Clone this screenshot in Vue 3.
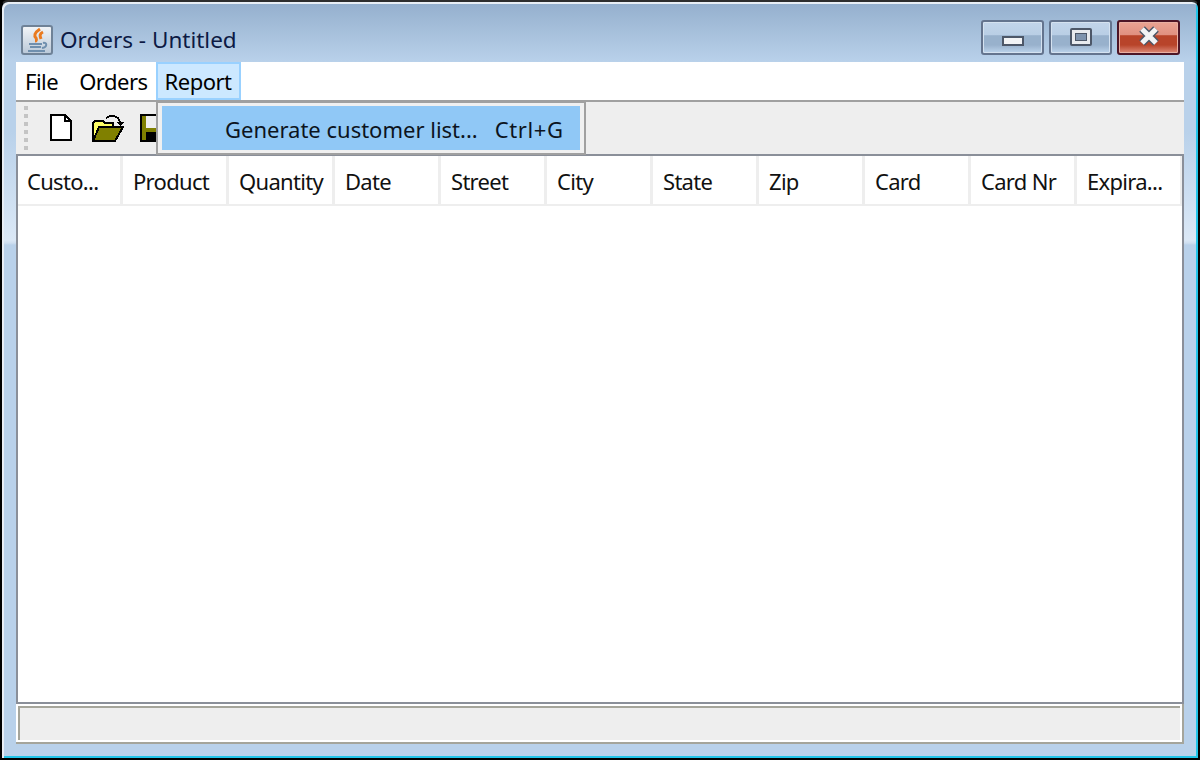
<template>
  <div class="window">
    <div class="titlebar">
      <svg class="app-icon" width="32" height="30" viewBox="0 0 32 30">
        <defs>
          <linearGradient id="tile" x1="0" y1="0" x2="0" y2="1">
            <stop offset="0" stop-color="#f4f6f8" />
            <stop offset="1" stop-color="#b9c8d8" />
          </linearGradient>
        </defs>
        <rect x="1" y="1" width="30" height="28" rx="2" fill="url(#tile)" stroke="#6f8297" stroke-width="2" />
        <path d="M19 4c-6 4-6 7-4 9 1 2 0 3-1 3M22 7c-4 2-3 4-2 7" fill="none" stroke="#ea7a1e" stroke-width="3" />
        <path d="M8 19h13M9 22h11M7 26h17M22 18c4-1 5 4-1 5" fill="none" stroke="#6f8fae" stroke-width="2" />
      </svg>
      <span class="title">Orders - Untitled</span>
      <div class="caption-buttons">
        <div class="cap-btn"><span class="min-glyph"></span></div>
        <div class="cap-btn"><span class="max-glyph"></span></div>
        <div class="cap-btn close">
          <svg class="close-glyph" width="24" height="20" viewBox="0 0 24 20">
            <path d="M5 3l14 14M19 3L5 17" fill="none" stroke="#4d5768" stroke-width="8" />
            <path d="M5 3l14 14M19 3L5 17" fill="none" stroke="#f2f3f5" stroke-width="5" />
          </svg>
        </div>
      </div>
    </div>

    <div class="content">
      <div class="menubar">
        <div v-for="m in menus" :key="m" class="menu" :class="{ open: m === 'Report' }">{{ m }}</div>
      </div>

      <div class="toolbar">
        <div class="grip"><i v-for="n in 6" :key="n"></i></div>
        <svg class="tool tool-new" width="24" height="28" viewBox="0 0 12 14" shape-rendering="crispEdges">
          <path d="M.5.5h7l3 3v9.500h-10z" fill="#fff" stroke="#000" />
          <path d="M7.500.5v3h3" fill="none" stroke="#000" />
        </svg>
        <svg class="tool tool-open" width="32" height="28" viewBox="0 0 16 14" shape-rendering="crispEdges">
          <path d="M.5 13.500v-9l1-1h4l1 1h4v2h-6l-3 7z" fill="#ffff66" stroke="#000" />
          <path d="M.5 13.500l3-7h12l-4 7z" fill="#808000" stroke="#000" />
          <path d="M7 2l2-1h2l2 1 1 2" fill="none" stroke="#000" />
          <path d="M12 4h4l-2 2z" fill="#000" />
        </svg>
        <svg class="tool tool-save" width="28" height="28" viewBox="0 0 14 14" shape-rendering="crispEdges">
          <rect x=".5" y=".5" width="13" height="13" fill="#808000" stroke="#000" />
          <rect x="3" y="1" width="8" height="6" fill="#eee" />
          <rect x="3" y="9" width="8" height="4" fill="#000" />
        </svg>
      </div>

      <div class="table">
        <div class="thead">
          <div v-for="c in columns" :key="c" class="th">{{ c }}</div>
        </div>
      </div>

      <div class="statusbar"><div class="status-inner"></div></div>

      <div class="popup">
        <div class="popup-item">
          <span>Generate customer list...</span>
          <span class="shortcut">Ctrl+G</span>
        </div>
      </div>
    </div>
  </div>
</template>

<script setup>
const menus = ['File', 'Orders', 'Report']
const columns = ['Custo...', 'Product', 'Quantity', 'Date', 'Street', 'City', 'State', 'Zip', 'Card', 'Card Nr', 'Expira...']
</script>

<style>
html, body { margin: 0; background: #000; }
</style>

<style scoped>
.window {
  box-sizing: border-box;
  width: 1200px;
  height: 760px;
  display: flex;
  flex-direction: column;
  padding: 0 14px 14px;
  border: 2px solid #000;
  border-top-color: #2e2e2e;
  box-shadow: inset 2px 2px 0 #e8eef5, inset -2px -2px 0 #22c4e8;
  background: linear-gradient(#94afcd 0, #b9d1ea 60px, #b9d1ea 130px, #dbe8f6 238px, #cfdff0 241px, #b9d1ea 243px);
  font-family: "Noto Sans", "DejaVu Sans", sans-serif;
  color: #000;
  border-radius: 8px 8px 0 0;
}
.titlebar {
  height: 60px;
  flex: none;
  display: flex;
  align-items: center;
  padding: 16px 4px 0 5px;
  box-sizing: border-box;
}
.app-icon { flex: none; }
.title {
  margin: -2px 0 0 7px;
  font-size: 22.500px;
  color: #0c1a44;
}
.caption-buttons {
  margin-left: auto;
  display: flex;
  gap: 5px;
  margin-top: -5px;
}
.cap-btn {
  box-sizing: border-box;
  width: 63px;
  height: 35px;
  border: 2px solid #64748e;
  border-radius: 3px;
  box-shadow: inset 0 0 0 1px #d5e2f0;
  background: linear-gradient(#c2d5ea 0, #b9cee5 42%, #98b1cc 44%, #98b1cc 74%, #bdd4ec 100%);
  display: flex;
  align-items: center;
  justify-content: center;
}
.close {
  border-color: #4d1526;
  box-shadow: inset 0 0 0 1px #e9b0a3;
  background: linear-gradient(#eaa393 0, #e09080 42%, #b8442a 44%, #b8442a 74%, #dd8a78 100%);
}
.min-glyph {
  display: block;
  box-sizing: border-box;
  width: 22px;
  height: 10px;
  margin-top: 6px;
  border: 2px solid #4d5768;
  background: #f2f3f5;
}
.max-glyph {
  display: block;
  box-sizing: border-box;
  width: 22px;
  height: 18px;
  margin-top: -2px;
  border: 2px solid #4d5768;
  border-radius: 2px;
  background: #e8eaee;
  position: relative;
}
.max-glyph::after {
  content: "";
  position: absolute;
  left: 4px;
  top: 4px;
  width: 10px;
  height: 6px;
  background: #7f93ad;
  outline: 1px solid #4d5768;
}
.close-glyph { margin-top: -3px; }
.content {
  position: relative;
  flex: 1;
  display: flex;
  flex-direction: column;
  min-height: 0;
}
.menubar {
  height: 38px;
  flex: none;
  display: flex;
  padding-left: 1px;
  background: #fff;
  border-bottom: 2px solid #a0a0a0;
}
.menu {
  box-sizing: border-box;
  height: 38px;
  padding: 0 8px;
  font-size: 22px;
  letter-spacing: -.5px;
  line-height: 38px;
}
.menu:first-child { margin-right: 5px; }
.menu.open {
  background: #cce8ff;
  border: 2px solid #99d1ff;
  padding: 0 7px;
  line-height: 34px;
}
.toolbar {
  height: 52px;
  flex: none;
  display: flex;
  align-items: center;
  background: #eee;
}
.grip {
  display: flex;
  flex-direction: column;
  gap: 4px;
  margin-left: 8px;
  width: 4px;
}
.grip i {
  display: block;
  width: 4px;
  height: 4px;
  background: #c4c4c4;
}
.tool { flex: none; }
.tool-new { margin-left: 22px; }
.tool-open { margin-left: 18px; }
.tool-save { margin-left: 16px; }
.table {
  flex: 1;
  min-height: 0;
  box-sizing: border-box;
  border: 2px solid #8a8f99;
  background: #fff;
}
.thead {
  display: flex;
  height: 50px;
  overflow: hidden;
  border-bottom: 2px solid #eee;
  box-sizing: border-box;
}
.th {
  box-sizing: border-box;
  width: 106px;
  flex: none;
  padding-left: 10px;
  border-right: 3px solid #eee;
  font-size: 22px;
  letter-spacing: -.7px;
  line-height: 50px;
  white-space: nowrap;
  overflow: hidden;
  color: #111;
}
.th:first-child { width: 105px; padding-left: 9px; }
.statusbar {
  height: 40px;
  flex: none;
  box-sizing: border-box;
  padding: 2px 2px 0;
  background: #fff;
  border-bottom: 2px solid #a5a59b;
  border-right: 2px solid #a5a59b;
}
.status-inner {
  box-sizing: border-box;
  height: 34px;
  background: #eee;
  border-top: 2px solid #a5a59b;
  border-left: 2px solid #a5a59b;
}
.popup {
  position: absolute;
  left: 140px;
  top: 39px;
  width: 430px;
  height: 54px;
  box-sizing: border-box;
  border: 2px solid #a0a0a0;
  background: #f0f0f0;
  padding: 3px 4px;
}
.popup-item {
  height: 44px;
  display: flex;
  align-items: center;
  gap: 17px;
  padding: 2px 0 0 63px;
  box-sizing: border-box;
  background: #90c8f6;
  font-size: 22px;
  color: #0c1420;
  white-space: nowrap;
}
.shortcut { letter-spacing: .6px; }
</style>
